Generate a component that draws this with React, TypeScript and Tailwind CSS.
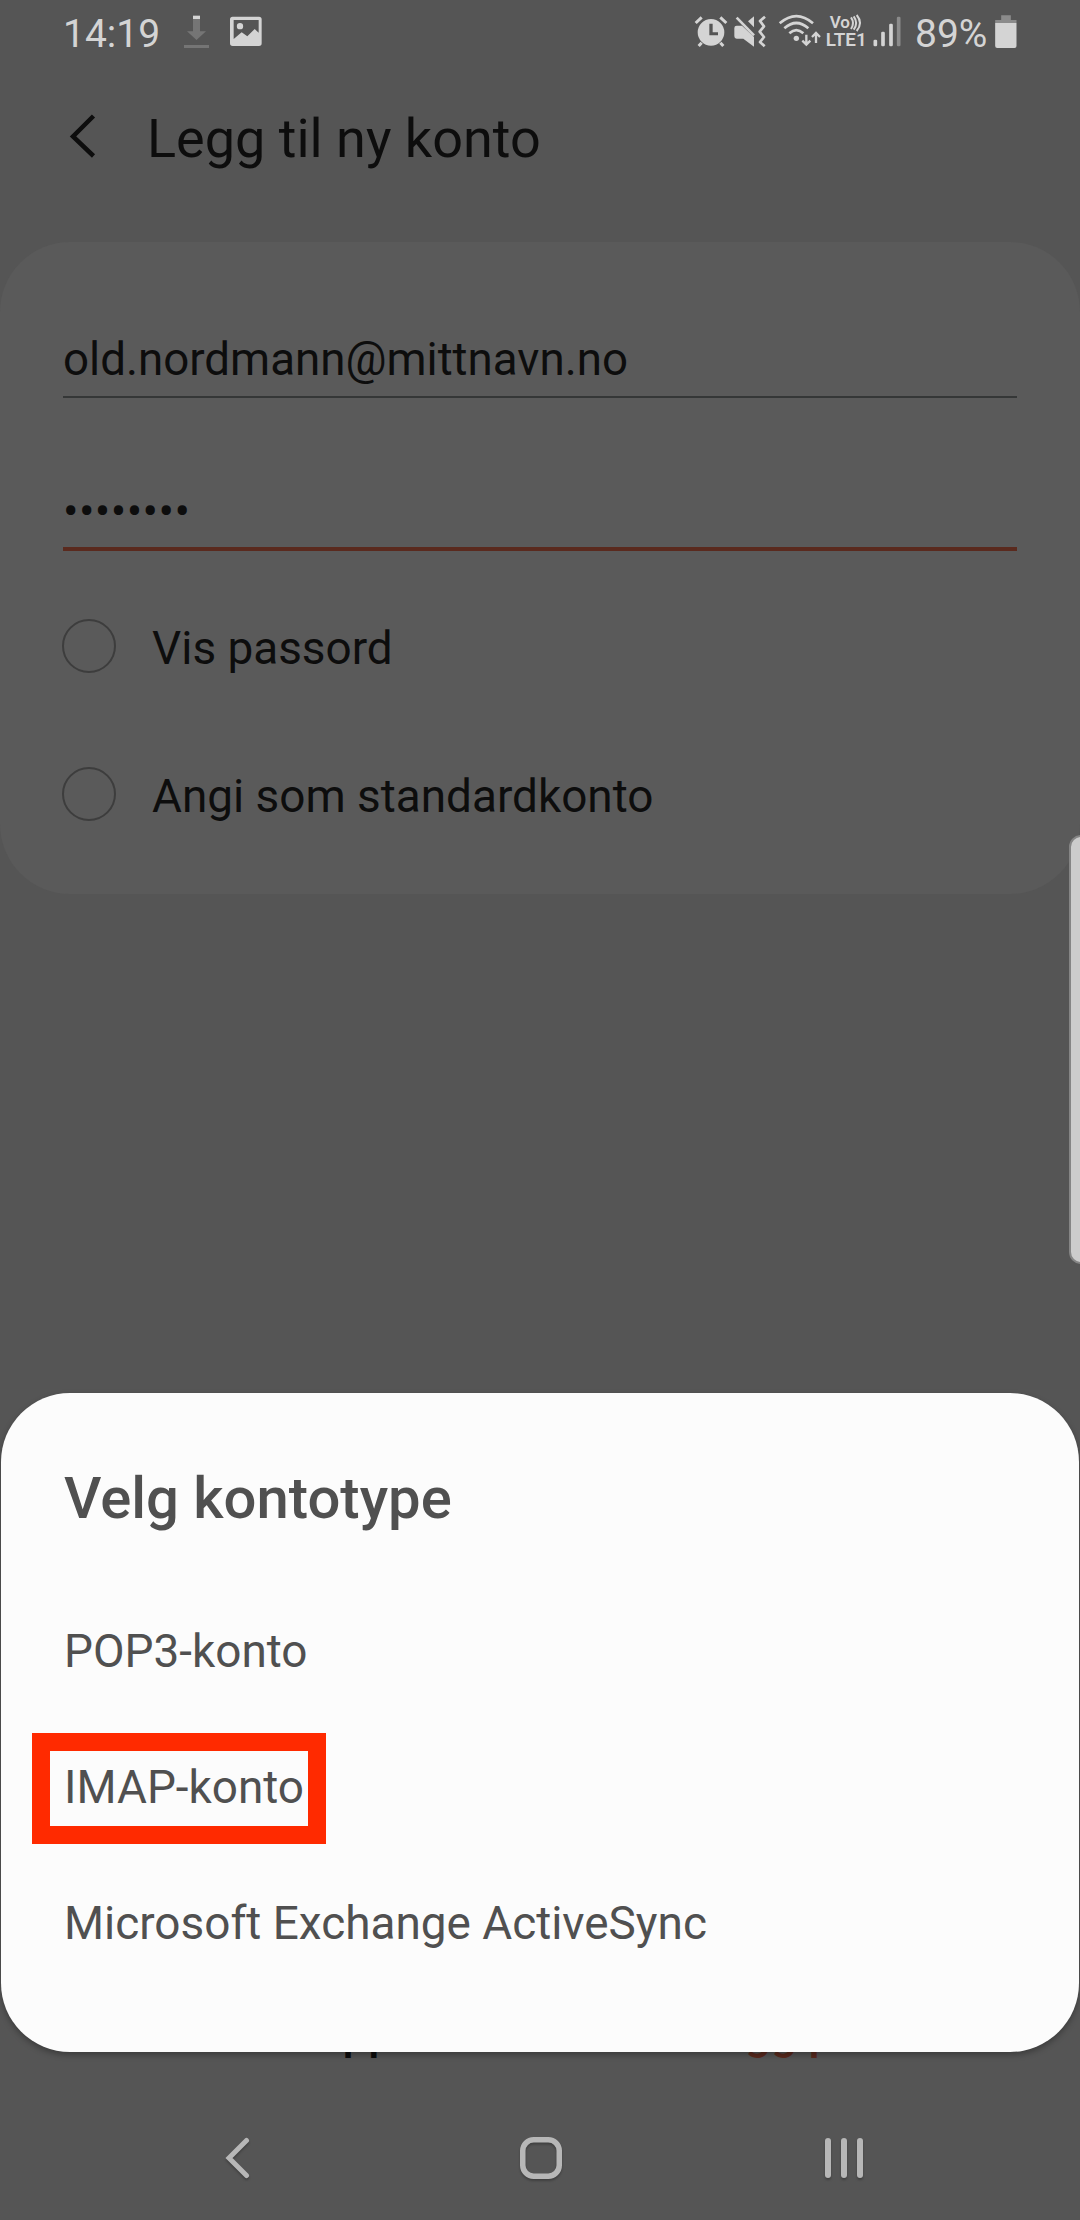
import type { ReactNode } from "react";

const ACCOUNT_TYPES = [
  { id: "pop3", label: "POP3-konto", highlighted: false },
  { id: "imap", label: "IMAP-konto", highlighted: true },
  { id: "eas", label: "Microsoft Exchange ActiveSync", highlighted: false },
];

function StatusBar() {
  return (
    <div className="flex h-[70px] items-start pl-[63px] pr-[63px] text-[#d4d4d4]">
      <span className="w-[121px] text-[39px] leading-[68px]">14:19</span>
      <svg viewBox="432 0 75 210" className="h-[70px] w-[25px]" fill="#757575" aria-hidden="true">
        <path d="M459 56h21v38h18l-28.500 26L441 94h18z" />
        <path d="M459 47h21v10h-21z" fill="#d4d4d4" />
        <path d="M432 135h75v9h-75z" />
      </svg>
      <svg viewBox="570 0 96 210" className="ml-[21px] h-[70px] w-[32px]" fill="currentColor" aria-hidden="true">
        <path
          fillRule="evenodd"
          d="M578 50h79q8 0 8 8v72q0 8-8 8h-79q-8 0-8-8V58q0-8 8-8zm3 10v57l24-20 17 12 22-22 12 11V60zM600 69a9.500 9.500 0 1 1 0 19 9.500 9.500 0 0 1 0-19z"
        />
      </svg>

      <div className="ml-auto flex items-start">
        {/* alarm */}
        <svg viewBox="45 0 102 210" className="h-[70px] w-[34px]" fill="currentColor" aria-hidden="true">
          <path fillRule="evenodd" d="M96 57a40 40 0 1 1 0 80 40 40 0 0 1 0-80zm-5 14v35h26v-9h-16V71z" />
          <path d="M50 69l18-17M124 52l18 17M68 128l-9 10M124 128l9 10" stroke="currentColor" strokeWidth="9" />
        </svg>
        {/* vibrate */}
        <svg viewBox="165 0 96 210" className="ml-[6px] h-[70px] w-[32px]" fill="currentColor" aria-hidden="true">
          <path d="M173 77h16l36 34v29l-32-24h-20q-7 0-7-7V84q0-7 7-7z" />
          <path d="M225 49v33l-18-18z" />
          <path d="M173 53l52 53" stroke="currentColor" strokeWidth="8" />
          <path d="M258 50l-15 13 12 16-13 16 13 16-12 15 14 13" fill="none" stroke="currentColor" strokeWidth="8" strokeLinejoin="round" />
        </svg>
        {/* wifi */}
        <svg viewBox="297 0 129 210" className="ml-[12px] h-[70px] w-[43px]" fill="none" stroke="currentColor" strokeWidth="8" aria-hidden="true">
          <path d="M302 70q50-43 100 0M316 85q36-32 72 0M331 100q21-19 42 0" />
          <circle cx="352" cy="115" r="8" fill="currentColor" stroke="none" />
          <path d="M382 104v31M370 122l12 12 12-12M411 129V99M399 111l12-12 12 12" strokeWidth="7" />
        </svg>
        <svg viewBox="440 0 120 210" className="ml-[5px] h-[70px] w-[40px]" fill="currentColor" aria-hidden="true">
          <text x="451" y="83" fontSize="49" fontWeight="600" fontFamily="Roboto" textLength="61" lengthAdjust="spacingAndGlyphs">Vo</text>
          <path d="M515 52q12 17 0 35M523 49q15 20 0 40M532 45q20 24 0 48" fill="none" stroke="currentColor" strokeWidth="6" />
          <text x="439" y="138" fontSize="56" fontWeight="600" fontFamily="Roboto" textLength="123" lengthAdjust="spacingAndGlyphs">LTE1</text>
        </svg>
        {/* signal */}
        <svg viewBox="581 0 83 210" className="ml-[7px] h-[70px] w-[28px]" fill="currentColor" aria-hidden="true">
          <rect x="582" y="119" width="11" height="20" rx="4" />
          <rect x="605" y="95" width="11" height="44" rx="4" />
          <rect x="629" y="71" width="11" height="68" rx="4" />
          <rect x="652" y="50" width="11" height="89" rx="4" fill="#8b8b8b" />
        </svg>
        <span className="ml-[14px] w-[80px] text-[39px] leading-[68px]">89%</span>
        <svg viewBox="947 0 65 210" className="h-[70px] w-[22px]" fill="currentColor" aria-hidden="true">
          <path d="M965 46h29v14h17v9h-64v-9h18z" fill="#8b8b8b" />
          <path d="M947 69h64v69q0 6-6 6h-52q-6 0-6-6z" />
        </svg>
      </div>
    </div>
  );
}

function CheckRow({ children }: { children: ReactNode }) {
  return (
    <div className="flex h-[148px] items-center">
      <span className="-ml-px size-[54px] rounded-full border-2 border-[#3d3d3d]" />
      <span className="ml-[36px] pt-[4px] text-[45.9px] leading-[60px]">{children}</span>
    </div>
  );
}

function AccountTypeSheet() {
  return (
    <div className="absolute left-px top-[1393px] h-[659px] w-[1078px] rounded-[69px] bg-[#fcfcfc] px-[63px] pt-[65px] text-[#505050] shadow-[0_3px_6px_rgba(0,0,0,0.3)]">
      <h2 className="text-[58px] font-medium leading-[80px]">Velg kontotype</h2>
      <ul className="mt-[45px]">
        {ACCOUNT_TYPES.map((type) => (
          <li key={type.id} className="relative h-[136px] text-[45.9px] leading-[136px]">
            {type.label}
            {type.highlighted && (
              <span className="absolute -left-[32px] top-[14px] h-[111px] w-[294px] border-[18px] border-[#ff2a00]" />
            )}
          </li>
        ))}
      </ul>
    </div>
  );
}

function NavBar() {
  return (
    <div className="mt-[33px] flex h-[124px] items-center justify-center gap-[261px] pl-[2px] text-[#b7b7b7]">
      <svg viewBox="0 0 42 42" className="size-[42px] drop-shadow-[0_2px_1px_rgba(0,0,0,0.25)]" fill="none" stroke="currentColor" strokeWidth="5" strokeLinecap="round" aria-hidden="true">
        <path d="M29.500 3.500L12 21l17.500 17.500" />
      </svg>
      <svg viewBox="0 0 42 42" className="size-[42px] drop-shadow-[0_2px_1px_rgba(0,0,0,0.25)]" fill="none" stroke="currentColor" strokeWidth="5.500" aria-hidden="true">
        <rect x="2.750" y="2.750" width="36.500" height="36.500" rx="11" />
      </svg>
      <svg viewBox="0 0 42 42" className="size-[42px] drop-shadow-[0_2px_1px_rgba(0,0,0,0.25)]" fill="currentColor" aria-hidden="true">
        <rect x="2" y="1" width="6" height="40" rx="3" />
        <rect x="18" y="1" width="6" height="40" rx="3" />
        <rect x="34" y="1" width="6" height="40" rx="3" />
      </svg>
    </div>
  );
}

export default function App() {
  return (
    <div className="relative flex h-[2220px] w-[1080px] flex-col overflow-hidden bg-[#555555] font-[Roboto,sans-serif] text-[#0d0d0d]">
      <StatusBar />

      <header className="flex h-[171px] items-start pl-[68px] pt-[33px]">
        <svg viewBox="0 0 28 46" className="mt-[11px] h-[46px] w-[28px]" fill="none" stroke="currentColor" strokeWidth="4.500" aria-hidden="true">
          <path d="M25.500 2L5 22.500 25.500 42" />
        </svg>
        <h1 className="ml-[51px] text-[54px] leading-[71px]">Legg til ny konto</h1>
      </header>

      <main className="mt-px h-[652px] rounded-[70px] bg-[#5a5a5a] px-[63px]">
        <div className="flex h-[156px] items-end border-b-2 border-[#353737] text-[45.7px] leading-[72px]">
          old.nordmann@mittnavn.no
        </div>
        <div className="flex h-[153px] items-end border-b-4 border-[#5a2a1e] text-[46px] leading-[72px] tracking-[0.4px]">
          ••••••••
        </div>
        <div className="mt-[21px]">
          <CheckRow>Vis passord</CheckRow>
          <CheckRow>Angi som standardkonto</CheckRow>
        </div>
      </main>

      {/* only the descenders show below the sheet */}
      <div className="mt-auto flex text-[46px] font-medium leading-[60px]">
        <span className="ml-[137px] w-[557px]">Manuelt oppsett</span>
        <span className="text-[#5a2a1e]">Logg på</span>
      </div>

      <NavBar />
      <AccountTypeSheet />
      <div className="absolute left-[1069px] top-[835px] h-[429px] w-[24px] rounded-[14px] border-2 border-[#858585] bg-[#cccccc]" />
    </div>
  );
}
